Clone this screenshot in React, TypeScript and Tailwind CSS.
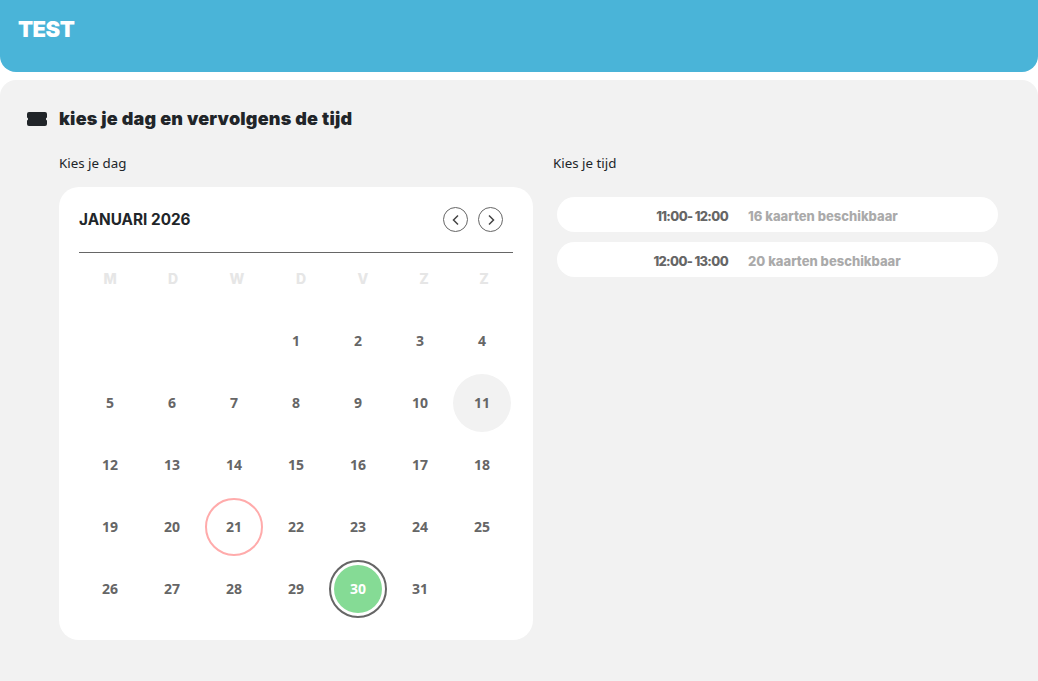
const heads = ["M", "D", "W", "D", "V", "Z", "Z"];
const days: (number | null)[] = [null, null, null, ...Array.from({ length: 31 }, (_, i) => i + 1), null];
const slots = [
  ["11:00- 12:00", "16 kaarten beschikbaar"],
  ["12:00- 13:00", "20 kaarten beschikbaar"],
];
const heavy = "font-['Inter','Liberation_Sans',sans-serif]";

function Day({ d }: { d: number | null }) {
  if (d === null) return <div className="h-[62px]" />;
  const base = "flex h-[58px] w-[58px] items-center justify-center rounded-full text-sm font-bold";
  if (d === 30)
    return (
      <div className="flex h-[62px] items-center justify-center">
        <div className="flex h-[58px] w-[58px] items-center justify-center rounded-full border-2 border-[#666]">
          <div className="flex h-[48px] w-[48px] items-center justify-center rounded-full bg-[#85db95] text-sm font-bold text-white">30</div>
        </div>
      </div>
    );
  const extra = d === 11 ? "bg-[#f2f2f2]" : d === 21 ? "border-2 border-[#ffabab]" : "";
  return (
    <div className="flex h-[62px] items-center justify-center">
      <div className={`${base} ${extra}`}>{d}</div>
    </div>
  );
}

export default function App() {
  return (
    <div className="flex h-[681px] w-[1038px] flex-col gap-2 overflow-hidden bg-white font-['Noto_Sans',sans-serif] text-[#212529]">
      <header className="h-[72px] shrink-0 rounded-b-2xl bg-[#4ab4d8] pl-[18px] pt-[14px]">
        <h1 className={`${heavy} text-[22px] leading-[30px] font-black tracking-[-0.5px] text-white`}>TEST</h1>
      </header>
      <main className="flex-1 rounded-t-2xl bg-[#f2f2f2] pl-[26px] pt-[26px]">
        <div className="flex items-center gap-[11px]">
          <svg width="22" height="14" viewBox="0 0 22 14" fill="#212529">
            <path d="M3 0h16a2 2 0 0 1 2 2v3.5a1.6 1.6 0 0 0 0 3V12a2 2 0 0 1-2 2H3a2 2 0 0 1-2-2V8.500a1.600 1.600 0 0 0 0-3V2a2 2 0 0 1 2-2z" />
          </svg>
          <h2 className={`${heavy} text-[18px] leading-[26px] font-black tracking-[0.2px]`}>kies je dag en vervolgens de tijd</h2>
        </div>
        <div className="mt-[21px] flex pl-[33px]">
          <section className="w-[474px]">
            <div className="text-[13.33px] leading-[20px]">Kies je dag</div>
            <div className="mt-[14px] h-[453px] rounded-[20px] bg-white px-5 text-[#666]">
              <div className="flex h-[66px] items-center justify-between border-b border-[#666]">
                <span className={`${heavy} mt-[2px] text-[15.3px] font-bold text-[#212529]`}>JANUARI 2026</span>
                <div className="mr-[10px] flex gap-[10px]">
                  <button className="flex h-[25px] w-[25px] items-center justify-center rounded-full border border-[#666]">
                    <svg width="10" height="12" viewBox="0 0 10 12" fill="none" stroke="#444" strokeWidth="1.5"><path d="M7 1.5 2.5 6 7 10.5" /></svg>
                  </button>
                  <button className="flex h-[25px] w-[25px] items-center justify-center rounded-full border border-[#666]">
                    <svg width="10" height="12" viewBox="0 0 10 12" fill="none" stroke="#444" strokeWidth="1.5"><path d="M3 1.5 7.5 6 3 10.5" /></svg>
                  </button>
                </div>
              </div>
              <div className={`${heavy} mt-[12px] grid h-[26px] grid-cols-[62px_64px_64px_64px_60px_62px_58px] items-center text-center text-[14px] font-extrabold text-[#e6e6e6]`}>
                {heads.map((h, i) => (
                  <div key={i}>{h}</div>
                ))}
              </div>
              <div className="mt-[19px] grid grid-cols-7">
                {days.map((d, i) => (
                  <Day key={i} d={d} />
                ))}
              </div>
            </div>
          </section>
          <section className="ml-[20px] w-[445px]">
            <div className="text-[13.33px] leading-[20px]">Kies je tijd</div>
            <div className="mt-6 flex flex-col gap-[10px] pl-[4px]">
              {slots.map(([t, c]) => (
                <div key={t} className={`${heavy} flex h-[35px] w-[441px] items-center gap-5 rounded-full bg-white pt-[4px] text-[13px] font-extrabold`}>
                  <span className="w-[171px] text-right tracking-[-0.65px] text-[#666]">{t}</span>
                  <span className="tracking-[0px] text-[#aaa]">{c}</span>
                </div>
              ))}
            </div>
          </section>
        </div>
      </main>
    </div>
  );
}
